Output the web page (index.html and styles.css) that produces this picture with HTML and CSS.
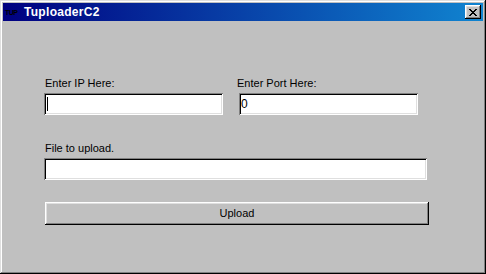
FILE: index.html
```html
<!DOCTYPE html>
<html lang="en">
<head>
	<meta charset="UTF-8">
	<title>TuploaderC2</title>
	<link rel="stylesheet" href="styles.css">
</head>
<body>

<div class="window">
	<div class="titlebar">
		<span class="appicon">TUP</span>
		<span class="title">TuploaderC2</span>
		<button class="close" title="Close">
			<svg width="8" height="7" viewBox="0 0 8 7">
				<path d="M0 0h2v1h-2zM6 0h2v1h-2zM1 1h2v1h-2zM5 1h2v1h-2zM2 2h4v1h-4zM3 3h2v1h-2zM2 4h4v1h-4zM1 5h2v1h-2zM5 5h2v1h-2zM0 6h2v1h-2zM6 6h2v1h-2z" fill="#000"/>
			</svg>
		</button>
	</div>

	<div class="client">
		<div class="row">
			<div class="field">
				<label for="ip">Enter IP Here:</label>
				<div class="edit"><span class="caret"></span></div>
			</div>
			<div class="field port">
				<label for="port">Enter Port Here:</label>
				<div class="edit">0</div>
			</div>
		</div>

		<div class="field wide">
			<label>File to upload.</label>
			<div class="edit"></div>
		</div>

		<button class="upload">Upload</button>
	</div>
</div>

</body>
</html>
```

FILE: styles.css
```css
body {
	margin: 0;
	background: #c0c0c0;
	font-family: "Liberation Sans", Arial, sans-serif;
	font-size: 11px;
}

.window {
	width: 486px;
	height: 274px;
	box-sizing: border-box;
	padding: 3px;
	background: #c0c0c0;
	box-shadow: inset -1px -1px #000, inset 1px 1px #dfdfdf, inset -2px -2px #808080, inset 2px 2px #fff;
}

.titlebar {
	height: 18px;
	display: flex;
	align-items: center;
	background: linear-gradient(to right, #000080, #1084d0);
	color: #fff;
}

.appicon {
	width: 16px;
	margin-left: 2px;
	font-size: 7px;
	font-weight: bold;
	letter-spacing: -0.5px;
	color: #000;
	line-height: 8px;
	padding-top: 2px;
}

.title {
	margin-left: 3px;
	font-size: 12px;
	font-weight: bold;
	letter-spacing: 0.3px;
	flex: 1;
}

.close {
	width: 16px;
	height: 14px;
	margin-right: 2px;
	padding: 0;
	border: 0;
	background: #c0c0c0;
	display: flex;
	align-items: center;
	justify-content: center;
	box-shadow: inset -1px -1px #000, inset 1px 1px #fff, inset -2px -2px #808080, inset 2px 2px #dfdfdf;
}

.client {
	padding: 56px 0 0 41px;
}

.row {
	display: flex;
	gap: 16px;
}

.field {
	display: flex;
	flex-direction: column;
	width: 179px;
}

.field label {
	line-height: 13px;
	padding-left: 1px;
	margin-bottom: 3px;
	color: #000;
}

.field.port label {
	padding-left: 0;
	margin-left: -2px;
}

.field.wide {
	width: 383px;
	margin-top: 27px;
}

.edit {
	height: 22px;
	box-sizing: border-box;
	background: #fff;
	padding: 4px 2px;
	line-height: 14px;
	font-size: 12px;
	box-shadow: inset 1px 1px #808080, inset -1px -1px #fff, inset 2px 2px #000, inset -2px -2px #dfdfdf;
}

.caret {
	display: inline-block;
	width: 1px;
	height: 14px;
	margin-left: 1px;
	background: #000;
	vertical-align: top;
}

.upload {
	display: block;
	width: 384px;
	height: 23px;
	margin: 22px 0 0 1px;
	padding: 0 0 1px;
	border: 0;
	background: #c0c0c0;
	font-family: "Liberation Sans", Arial, sans-serif;
	font-size: 11px;
	color: #000;
	box-shadow: inset -1px -1px #000, inset 1px 1px #fff, inset -2px -2px #808080, inset 2px 2px #dfdfdf;
}
```
